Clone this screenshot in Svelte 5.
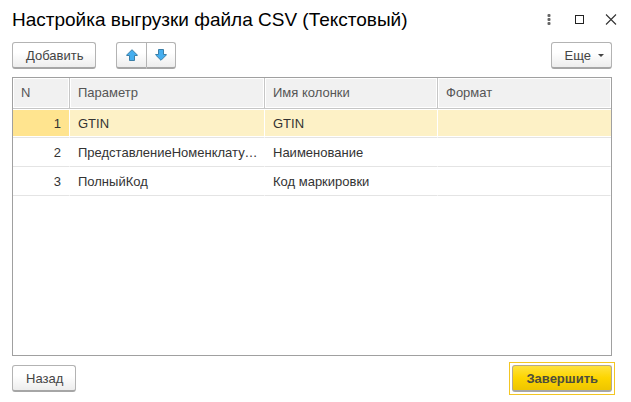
<script>
  let selected = $state(1);

  const rows = [
    { n: 1, param: 'GTIN', column: 'GTIN', format: '' },
    { n: 2, param: 'ПредставлениеНоменклатуры', column: 'Наименование', format: '' },
    { n: 3, param: 'ПолныйКод', column: 'Код маркировки', format: '' }
  ];
</script>

<main class="dialog">
  <header class="titlebar">
    <h1>Настройка выгрузки файла CSV (Текстовый)</h1>
    <div class="window-buttons">
      <button class="icon" aria-label="Меню">
        <svg width="12" height="12" viewBox="0 0 12 12" fill="#666">
          <rect x="4.5" y="0" width="3" height="3" rx="1" />
          <rect x="4.5" y="4" width="3" height="3" rx="1" />
          <rect x="4.5" y="8" width="3" height="3" rx="1" />
        </svg>
      </button>
      <button class="icon" aria-label="Развернуть">
        <svg width="12" height="12" viewBox="0 0 12 12" fill="none" stroke="#222">
          <rect x="1.5" y="1.5" width="8" height="8" />
        </svg>
      </button>
      <button class="icon" aria-label="Закрыть">
        <svg width="12" height="12" viewBox="0 0 12 12" fill="none" stroke="#333" stroke-width="1.1">
          <path d="M1 .5L11 10.5M11 .5L1 10.5" />
        </svg>
      </button>
    </div>
  </header>

  <div class="toolbar">
    <button class="btn">Добавить</button>
    <div class="group">
      <button class="btn arrow" aria-label="Переместить вверх">
        <svg width="12" height="12" viewBox="0 0 12 12" fill="#45aeef" stroke="#3b7fa8">
          <path d="M6 .7L11.3 6V6.5H8.5V11.5H3.5V6.5H.7V6Z" />
        </svg>
      </button>
      <button class="btn arrow" aria-label="Переместить вниз">
        <svg width="12" height="12" viewBox="0 0 12 12" fill="#45aeef" stroke="#3b7fa8">
          <path d="M6 11.3L.7 6V5.5H3.5V.5H8.5V5.5H11.3V6Z" />
        </svg>
      </button>
    </div>
    <button class="btn more">
      Еще
      <svg width="6" height="3" viewBox="0 0 6 3" fill="#444"><path d="M0 0H6L3 3Z" /></svg>
    </button>
  </div>

  <div class="table-box">
    <table>
      <colgroup>
        <col class="col-n" />
        <col class="col-param" />
        <col class="col-name" />
        <col />
      </colgroup>
      <thead>
        <tr>
          <th>N</th>
          <th>Параметр</th>
          <th>Имя колонки</th>
          <th>Формат</th>
        </tr>
      </thead>
      <tbody>
        {#each rows as row}
          <tr class:selected={row.n === selected} onclick={() => (selected = row.n)}>
            <td class="num">{row.n}</td>
            <td>{row.param}</td>
            <td>{row.column}</td>
            <td>{row.format}</td>
          </tr>
        {/each}
      </tbody>
    </table>
  </div>

  <footer>
    <button class="btn">Назад</button>
    <div class="default-frame">
      <button class="btn primary">Завершить</button>
    </div>
  </footer>
</main>

<style>
  :global(body) {
    background: #fff;
  }

  .dialog {
    box-sizing: border-box;
    display: flex;
    flex-direction: column;
    min-height: 100vh;
    padding: 8px 19px 10px 12px;
    font-family: 'Liberation Sans', Arial, sans-serif;
    font-size: 13px;
    color: #333;
  }

  .titlebar {
    display: flex;
    align-items: center;
    justify-content: space-between;
    height: 24px;
    margin-right: -9px;
  }

  h1 {
    margin: 0;
    font-size: 19px;
    font-weight: normal;
    line-height: 24px;
    color: #000;
    white-space: nowrap;
  }

  .window-buttons {
    display: flex;
    gap: 11px;
  }

  .icon {
    display: flex;
    padding: 4px;
    border: 0;
    background: none;
  }

  .toolbar {
    display: flex;
    margin-top: 10px;
  }

  .btn {
    box-sizing: border-box;
    display: flex;
    align-items: center;
    justify-content: center;
    height: 27px;
    padding: 0 12px 0 13px;
    border: 1px solid #b3b3b3;
    border-bottom: 2px solid #a6a6a6;
    border-radius: 3px;
    background: linear-gradient(#fff 40%, #ededed);
    font-family: inherit;
    font-size: 13px;
    color: #444;
  }

  .group {
    display: flex;
    margin-left: 20px;
  }

  .arrow {
    width: 29px;
    padding: 0;
  }

  .arrow:first-child {
    width: 31px;
    border-radius: 3px 0 0 3px;
  }

  .arrow:last-child {
    border-left: 0;
    border-radius: 0 3px 3px 0;
  }

  .more {
    gap: 7px;
    margin-left: auto;
    padding: 0 7px 0 13px;
  }

  .table-box {
    flex: 1;
    margin-top: 8px;
    border: 1px solid #a0a0a0;
  }

  table {
    width: 100%;
    table-layout: fixed;
    border-collapse: separate;
    border-spacing: 0;
  }

  .col-n {
    width: 57px;
  }

  .col-param {
    width: 195px;
  }

  .col-name {
    width: 173px;
  }

  th,
  td {
    box-sizing: border-box;
    padding: 0 4px 0 8px;
    overflow: hidden;
    text-align: left;
    text-overflow: ellipsis;
    white-space: nowrap;
  }

  th {
    height: 31px;
    padding-bottom: 2px;
    border-right: 1px solid #c6c6c6;
    border-bottom: 1px solid #c6c6c6;
    background: #f1f1f1;
    box-shadow: inset 0 0 0 1px #fff;
    font-weight: normal;
    color: #555;
  }

  th:last-child {
    border-right: 0;
  }

  td {
    height: 29px;
    border-right: 1px solid transparent;
    border-bottom: 1px solid #e4e4e4;
  }

  .selected td {
    border-right-color: #fff;
    background: #fdf1c6;
    box-shadow: inset 0 1px #fff, inset 0 -1px #fff;
  }

  .selected td:last-child {
    border-right: 0;
  }

  .selected .num {
    background: #ffe48f;
  }

  .num {
    padding-right: 8px;
    text-align: right;
  }

  footer {
    display: flex;
    justify-content: space-between;
    margin-top: 9px;
  }

  .default-frame {
    margin: -3px;
    padding: 2px;
    border: 1px solid #f3c623;
  }

  .primary {
    padding: 0 13px;
    border-color: #b5a98a;
    border-bottom-color: #a6a6a6;
    background: linear-gradient(#ffe23d, #fdd500 50%, #eec500);
    font-weight: bold;
    color: #4d4d3d;
  }
</style>
